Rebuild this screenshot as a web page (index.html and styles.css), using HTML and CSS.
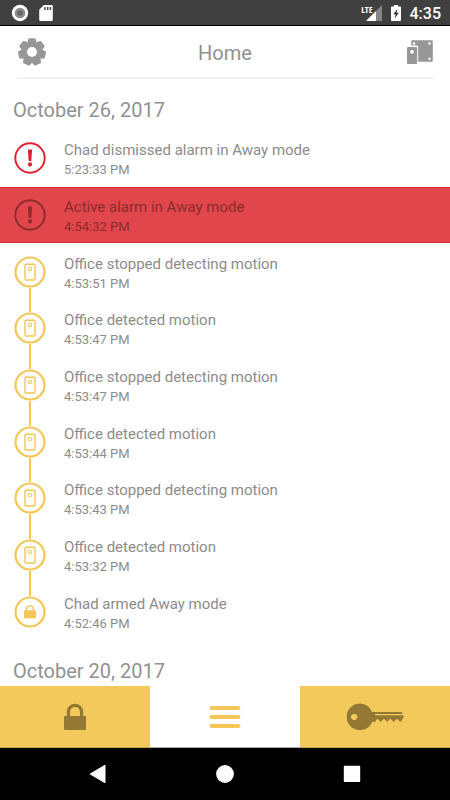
FILE: index.html
```html
<!DOCTYPE html>
<html lang="en">
<head>
<meta charset="utf-8">
<meta name="viewport" content="width=device-width, initial-scale=1">
<title>Home</title>
<link rel="stylesheet" href="styles.css">
</head>
<body>
<svg class="defs" aria-hidden="true">
  <symbol id="alert" viewBox="0 0 32 32">
    <circle cx="16" cy="16" r="14.7" fill="none" stroke="currentColor" stroke-width="1.9"/>
    <path d="M13.9 7.5h4.2l-.8 11.6h-2.6z" fill="currentColor"/>
    <circle cx="16" cy="22.4" r="2.1" fill="currentColor"/>
  </symbol>
  <symbol id="sensor" viewBox="0 0 32 32">
    <circle cx="16" cy="16" r="14.5" fill="none" stroke="currentColor" stroke-width="2.2"/>
    <rect x="11" y="8.2" width="10" height="15.8" rx="1" fill="none" stroke="currentColor" stroke-width="1.4"/>
    <circle cx="16" cy="13" r="1.7" fill="none" stroke="currentColor" stroke-width="1"/>
  </symbol>
  <symbol id="armed" viewBox="0 0 32 32">
    <circle cx="16" cy="16" r="14.5" fill="none" stroke="currentColor" stroke-width="2.2"/>
    <rect x="10" y="14.3" width="12" height="8" rx=".8" fill="currentColor"/>
    <path d="M12.6 15v-1.700a3.400 3.400 0 0 1 6.800 0V15" fill="none" stroke="currentColor" stroke-width="1.4"/>
  </symbol>
</svg>
<div class="screen">
  <div class="status">
    <div class="status-group">
      <svg width="18" height="18" viewBox="0 0 18 18"><circle cx="9" cy="9" r="8.2" fill="#fff"/><circle cx="9" cy="9" r="5.3" fill="#8c8c8c"/><circle cx="9" cy="9" r="2.8" fill="#666"/></svg>
      <svg width="14" height="18" viewBox="0 0 14 18"><path d="M5 1h7.5a1.3 1.3 0 0 1 1.3 1.3v13.4a1.3 1.3 0 0 1-1.3 1.3h-11A1.3 1.3 0 0 1 .2 15.700V5.800z" fill="#fff"/><path d="M5.900 3v3M8.700 3v3M11.400 3v3" stroke="#404040" stroke-width="1.4"/></svg>
    </div>
    <div class="status-group end">
      <div class="signal">
        <span class="lte">LTE</span>
        <svg width="16" height="16" viewBox="0 0 16 16"><path d="M16 0v16H0z" fill="#858585"/><path d="M10 6v10H0z" fill="#fff"/></svg>
      </div>
      <svg width="10" height="18" viewBox="0 0 10 18"><path d="M3 1h4v1.500h2a1 1 0 0 1 1 1V16a1 1 0 0 1-1 1H1a1 1 0 0 1-1-1V3.500a1 1 0 0 1 1-1h2z" fill="#fff"/><path d="M6.500 4.800 2.300 10.200h2.200L3.600 14.500l4.200-5.700H5.500z" fill="#333"/></svg>
      <span class="clock">4:35</span>
    </div>
  </div>

  <header class="header">
    <button class="icon-button" aria-label="Settings">
      <svg width="28" height="28" viewBox="0 0 28 28" fill="#979797">
        <circle cx="14" cy="14" r="7.800" fill="none" stroke="#979797" stroke-width="5.600"/>
        <path id="tooth" d="M9.200 4.500 10.400.900Q10.600.200 11.300.200h5.400Q17.400.200 17.600.900L18.800 4.500z"/>
        <use href="#tooth" transform="rotate(51.430 14 14)"/>
        <use href="#tooth" transform="rotate(102.860 14 14)"/>
        <use href="#tooth" transform="rotate(154.290 14 14)"/>
        <use href="#tooth" transform="rotate(205.710 14 14)"/>
        <use href="#tooth" transform="rotate(257.140 14 14)"/>
        <use href="#tooth" transform="rotate(308.570 14 14)"/>
      </svg>
    </button>
    <h1 class="title">Home</h1>
    <button class="icon-button" aria-label="Devices">
      <svg width="26" height="26" viewBox="0 0 26 26">
        <rect x="4.200" y="1.200" width="21.600" height="21.600" rx="1" fill="#979797"/>
        <rect x="-.8" y="6.600" width="12" height="19" rx="1.500" fill="#fff"/>
        <rect x="0" y="8" width="10.200" height="17" rx="1" fill="#979797"/>
        <g fill="#fff"><circle cx="5" cy="12.800" r="1.900"/><circle cx="7" cy="4.500" r="1.200"/><circle cx="22.500" cy="4.500" r="1.200"/><circle cx="22.500" cy="19.800" r="1.200"/></g>
      </svg>
    </button>
  </header>

  <main class="log">
    <h2 class="date">October 26, 2017</h2>
    <ol class="events">
      <li class="event alarm"><div class="rail"><svg class="badge"><use href="#alert"/></svg></div><div class="text"><p class="name">Chad dismissed alarm in Away mode</p><p class="time">5:23:33 PM</p></div></li>
      <li class="event active"><div class="rail"><svg class="badge"><use href="#alert"/></svg></div><div class="text"><p class="name">Active alarm in Away mode</p><p class="time">4:54:32 PM</p></div></li>
      <li class="event first"><div class="rail"><svg class="badge"><use href="#sensor"/></svg></div><div class="text"><p class="name">Office stopped detecting motion</p><p class="time">4:53:51 PM</p></div></li>
      <li class="event"><div class="rail"><svg class="badge"><use href="#sensor"/></svg></div><div class="text"><p class="name">Office detected motion</p><p class="time">4:53:47 PM</p></div></li>
      <li class="event"><div class="rail"><svg class="badge"><use href="#sensor"/></svg></div><div class="text"><p class="name">Office stopped detecting motion</p><p class="time">4:53:47 PM</p></div></li>
      <li class="event"><div class="rail"><svg class="badge"><use href="#sensor"/></svg></div><div class="text"><p class="name">Office detected motion</p><p class="time">4:53:44 PM</p></div></li>
      <li class="event"><div class="rail"><svg class="badge"><use href="#sensor"/></svg></div><div class="text"><p class="name">Office stopped detecting motion</p><p class="time">4:53:43 PM</p></div></li>
      <li class="event"><div class="rail"><svg class="badge"><use href="#sensor"/></svg></div><div class="text"><p class="name">Office detected motion</p><p class="time">4:53:32 PM</p></div></li>
      <li class="event last"><div class="rail"><svg class="badge"><use href="#armed"/></svg></div><div class="text"><p class="name">Chad armed Away mode</p><p class="time">4:52:46 PM</p></div></li>
    </ol>
    <h2 class="date next">October 20, 2017</h2>
  </main>

  <div class="tabs">
    <button class="tab" aria-label="Arm">
      <svg width="22" height="28" viewBox="0 0 22 28"><rect x="0" y="13" width="22" height="14" rx="1" fill="#947935"/><path d="M4.400 14V8.900a6.600 6.600 0 0 1 13.200 0V14" fill="none" stroke="#947935" stroke-width="3.200"/></svg>
    </button>
    <button class="tab selected" aria-label="History">
      <svg width="32" height="24" viewBox="0 0 32 24"><path d="M2.500 3h27M2.500 12h27M2.500 21h27" stroke="#f3c657" stroke-width="3.800" stroke-linecap="round"/></svg>
    </button>
    <button class="tab" aria-label="Keys">
      <svg width="58" height="28" viewBox="0 0 58 28"><path fill="#947935" fill-rule="evenodd" d="M14 .5a13.300 13.300 0 0 1 12 8.500H55.500L56.500 10v1H29v1.300H57.500V14L55 18.500H53.500Q52.500 16 50.800 16T48.500 18.500H47Q46 16 44.300 16T42 18.500H40.500Q39.500 16 37.800 16T35.500 18.500H34Q33 16 31.500 16T29.500 18.700H26.300A13.300 13.300 0 1 1 14 .5zM8.200 10.700a3.200 3.200 0 1 0 .01 0z"/></svg>
    </button>
  </div>

  <nav class="system">
    <button aria-label="Back"><svg width="18" height="20" viewBox="0 0 18 20"><path d="M16 1.200v17.600L1.200 10z" fill="#fff" stroke="#fff" stroke-linejoin="round"/></svg></button>
    <button aria-label="System home"><svg width="18" height="20" viewBox="0 0 18 20"><circle cx="9" cy="10" r="8.900" fill="#fff"/></svg></button>
    <button aria-label="Overview"><svg width="18" height="20" viewBox="0 0 18 20"><rect x=".8" y="1.700" width="16.400" height="16.400" rx="1" fill="#fff"/></svg></button>
  </nav>
</div>
</body>
</html>
```
FILE: styles.css
```css
* { box-sizing: border-box; }
body, h1, h2, p, ol { margin: 0; padding: 0; font-weight: 400; }
body { font-family: Roboto, "Liberation Sans", sans-serif; color: #8c8c8c; background: #fff; }
button { border: 0; padding: 0; background: none; font: inherit; display: flex; align-items: center; justify-content: center; }
svg { display: block; flex: none; }
.defs { position: absolute; width: 0; height: 0; }
.screen { min-height: 100vh; display: flex; flex-direction: column; }

.status { height: 26px; padding: 0 9px 0 11px; display: flex; align-items: center; justify-content: space-between; background: #404040; border-bottom: 1px solid #000; color: #fff; }
.status-group { display: flex; align-items: center; gap: 10px; }
.signal { display: flex; align-items: flex-end; }
.lte { align-self: flex-start; margin-right: -7px; font: 700 9px/9px "Open Sans", sans-serif; font-stretch: condensed; }
.end { gap: 9px; }
.clock { padding-top: 2px; font-size: 16px; line-height: 20px; font-weight: 500; }

.header { height: 53px; margin: 0 17px; display: flex; align-items: center; justify-content: space-between; border-bottom: 2px solid #f1f1f1; }
.title { padding-top: 2px; font-size: 20px; line-height: 24px; color: #919191; }
.icon-button { width: 30px; height: 30px; }
.icon-button:last-child { justify-content: flex-end; }

.log { flex: 1; display: flex; flex-direction: column; }
.date { height: 51px; padding: 19px 13px 0; font-size: 20px; line-height: 24px; color: #919191; }
.next { height: 46px; }
.events { flex: 1; list-style: none; display: grid; grid-auto-rows: 1fr; }
.event { display: flex; align-items: center; gap: 18px; padding-left: 14px; color: #8c8c8c; }
.rail { align-self: stretch; width: 32px; display: flex; flex-direction: column; align-items: center; color: #f3c657; }
.rail::before, .rail::after { content: ""; flex: 1; width: 2px; background: currentColor; }
.badge { width: 32px; height: 32px; }
.alarm .rail { color: #df1f2d; }
.alarm .rail::before, .alarm .rail::after, .active .rail::before, .active .rail::after,
.first .rail::before, .last .rail::after { background: none; }
.active, .active .rail { color: #8b2c2b; }
.active { background: #e1464d; box-shadow: inset 0 1px #dc2831, inset 0 -1px #dc2831; }
.text { padding-top: 3px; }
.name { font-size: 15px; line-height: 20px; }
.time { font-size: 13px; line-height: 19px; }

.tabs { height: 62px; display: grid; grid-template-columns: repeat(3, 1fr); }
.tab { background: #f3c95c; border-bottom: 1px solid #c9a549; }
.selected { background: #fff; border-bottom-color: #aaa; }
.system { height: 52px; padding: 0 35px; display: flex; align-items: center; justify-content: space-around; background: #000; }
```
